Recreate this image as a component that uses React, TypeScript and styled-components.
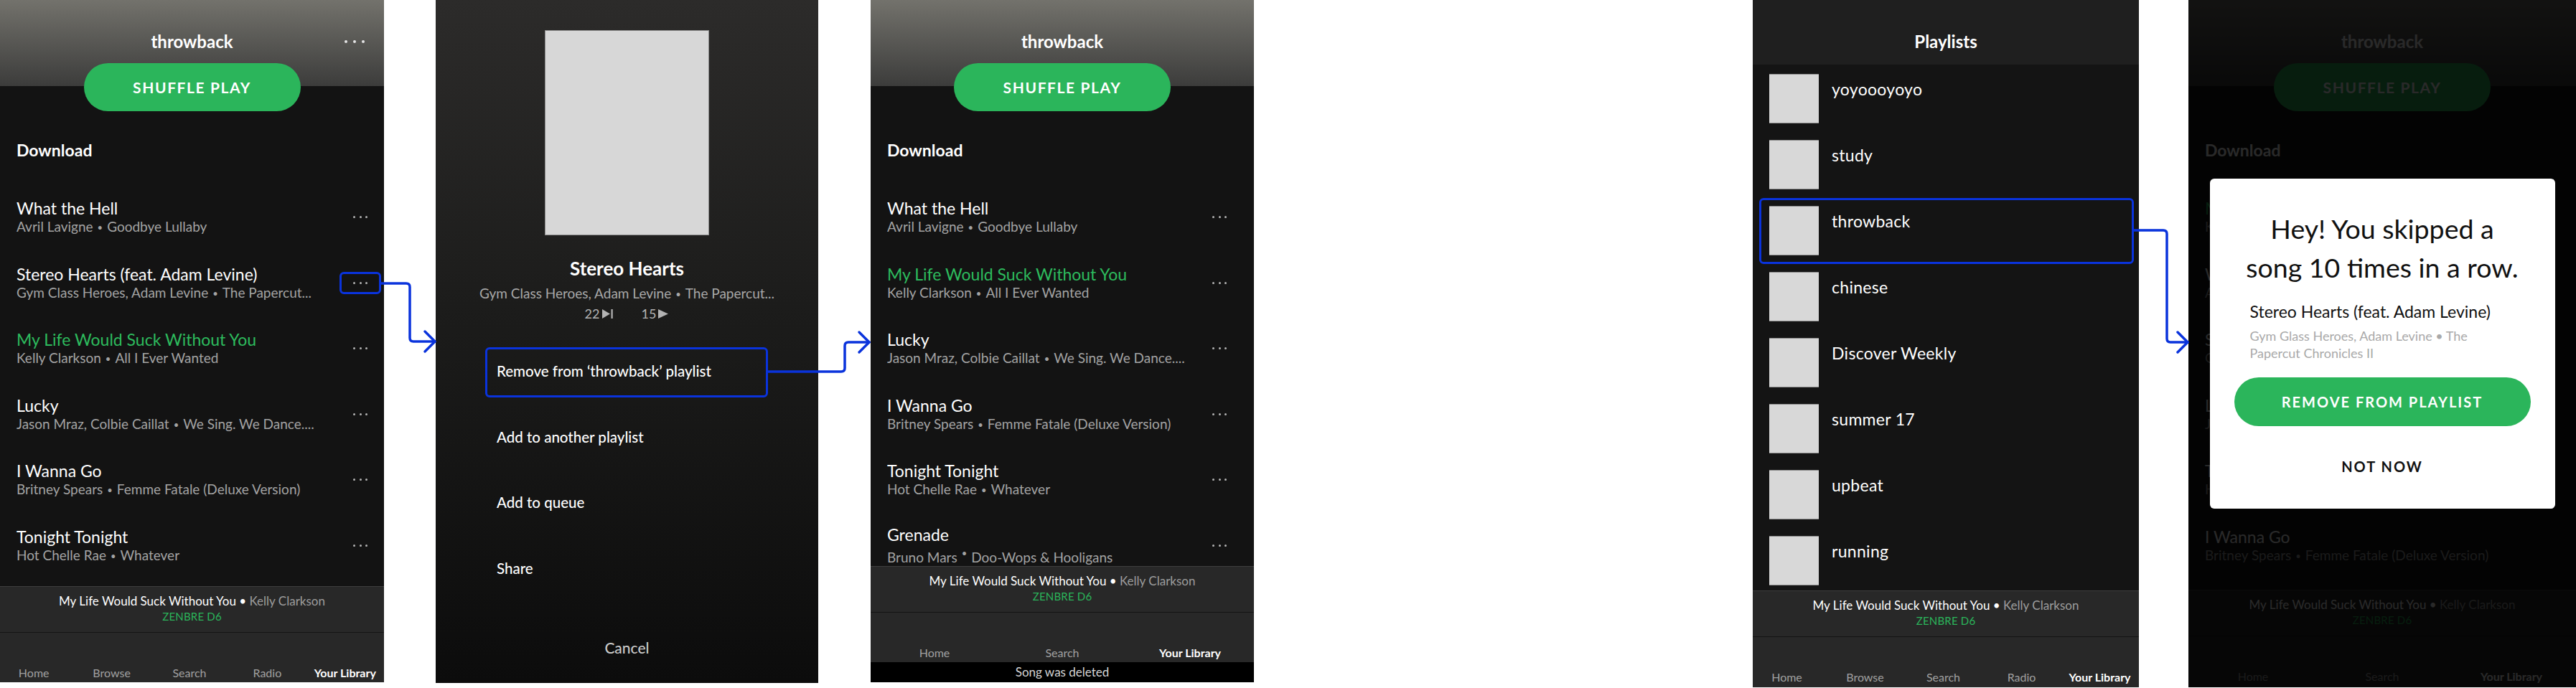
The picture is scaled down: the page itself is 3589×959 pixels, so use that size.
import React from "react";
import styled, { createGlobalStyle } from "styled-components";

const GREEN = "#2bb55b";
const BLUE = "#0a33dc";

const GlobalStyle = createGlobalStyle`
  html, body { margin: 0; padding: 0; background: #ffffff; }
  body { font-family: Lato, "Open Sans", sans-serif; -webkit-font-smoothing: antialiased; }
  * { box-sizing: border-box; }
`;

const Page = styled.div`
  position: relative;
  width: 3589px;
  height: 959px;
  display: flex;
  align-items: flex-start;
  overflow: hidden;
  background: #ffffff;
  font-family: Lato, "Open Sans", sans-serif;
`;

const Phone = styled.div<{ $w: number; $h: number; $ml: number; $bg?: string }>`
  position: relative;
  flex: none;
  width: ${(p) => p.$w}px;
  height: ${(p) => p.$h}px;
  margin-left: ${(p) => p.$ml}px;
  display: flex;
  flex-direction: column;
  overflow: hidden;
  background: ${(p) => p.$bg ?? "#131313"};
  color: #ffffff;
`;

const Scroll = styled.div<{ $gradient?: boolean }>`
  flex: 1;
  min-height: 0;
  overflow: hidden;
  background: ${(p) =>
    p.$gradient
      ? "linear-gradient(180deg, #73726c 0px, #3c3c3b 120px, #131313 120px)"
      : "#131313"};
`;

const TitleBar = styled.div`
  display: grid;
  grid-template-columns: 1fr auto 1fr;
  align-items: center;
  height: 28px;
  margin-top: 44px;
`;

const Title = styled.div`
  grid-column: 2;
  font-size: 24px;
  font-weight: 700;
  line-height: 28px;
  text-align: center;
`;

const DotGroup = styled.div<{ $gap: number; $pr?: number }>`
  grid-column: 3;
  justify-self: end;
  display: flex;
  align-items: center;
  gap: ${(p) => p.$gap}px;
  padding-right: ${(p) => p.$pr ?? 0}px;
`;

const Dot = styled.span<{ $size: number; $color: string }>`
  display: block;
  width: ${(p) => p.$size}px;
  height: ${(p) => p.$size}px;
  border-radius: 50%;
  background: ${(p) => p.$color};
`;

const PillButton = styled.div<{ $w: number }>`
  width: ${(p) => p.$w}px;
  height: 67px;
  margin: 16px auto 0;
  border-radius: 34px;
  background: ${GREEN};
  display: flex;
  align-items: center;
  justify-content: center;
  font-size: 21px;
  font-weight: 700;
  letter-spacing: 1.6px;
  color: #ffffff;
`;

const SectionLabel = styled.div`
  margin-top: 40px;
  padding-left: 23px;
  font-size: 23px;
  font-weight: 700;
  line-height: 28px;
`;

const SongList = styled.div`
  margin-top: 34px;
  display: flex;
  flex-direction: column;
`;

const SongRow = styled.div<{ $pr: number }>`
  flex: none;
  height: 91.5px;
  display: flex;
  align-items: center;
  padding-left: 23px;
  padding-right: ${(p) => p.$pr}px;
`;

const SongText = styled.div`
  flex: 1;
  min-width: 0;
`;

const SongTitle = styled.div<{ $active?: boolean }>`
  font-size: 23px;
  line-height: 28px;
  white-space: nowrap;
  color: ${(p) => (p.$active ? "#2dbb5d" : "#ffffff")};
`;

const SongSub = styled.div`
  font-size: 19px;
  line-height: 24px;
  white-space: nowrap;
  color: #a3a3a3;
`;

const Sep = styled.span<{ $raised?: boolean }>`
  font-size: 13px;
  margin: 0 6px;
  vertical-align: ${(p) => (p.$raised ? "8px" : "1px")};
`;

const DotsCell = styled.div<{ $boxed?: boolean }>`
  flex: none;
  width: 58px;
  height: 31px;
  border: 3px solid ${(p) => (p.$boxed ? BLUE : "transparent")};
  border-radius: 6px;
  display: flex;
  align-items: center;
  justify-content: center;
  gap: 5.5px;
`;

const MiniPlayer = styled.div`
  flex: none;
  height: 65px;
  background: #282828;
  border-top: 1px solid #3e3e3e;
  border-bottom: 1px solid #141414;
  padding-top: 9px;
  text-align: center;
`;

const MiniLine = styled.div`
  font-size: 17px;
  line-height: 22px;
  color: #ffffff;
  white-space: nowrap;
`;

const MiniArtist = styled.span`
  color: #9d9d9d;
`;

const DeviceLine = styled.div`
  font-size: 15px;
  line-height: 20px;
  color: ${GREEN};
  letter-spacing: 0.2px;
`;

const TabBar = styled.div<{ $cols: number; $h: number; $shift: number }>`
  flex: none;
  height: ${(p) => p.$h}px;
  margin-left: -${(p) => p.$shift}px;
  width: calc(100% + ${(p) => p.$shift}px);
  background: #282828;
  display: grid;
  grid-template-columns: repeat(${(p) => p.$cols}, 1fr);
  align-items: end;
  padding-bottom: ${(p) => p.$h - 66}px;
`;

const Tab = styled.div<{ $active?: boolean }>`
  font-size: 16px;
  line-height: 20px;
  text-align: center;
  white-space: nowrap;
  color: ${(p) => (p.$active ? "#ffffff" : "#a0a0a0")};
  font-weight: ${(p) => (p.$active ? 700 : 400)};
`;

const Toast = styled.div`
  flex: none;
  height: 28px;
  background: #000000;
  color: #d6d6d6;
  font-size: 17px;
  line-height: 28px;
  text-align: center;
`;

/* ---------- Context sheet ---------- */

const Art = styled.div<{ $w: number; $h: number }>`
  flex: none;
  width: ${(p) => p.$w}px;
  height: ${(p) => p.$h}px;
  background: #d7d7d7;
  border: 1px solid #8a8a8a;
`;

const SheetBody = styled.div`
  display: flex;
  flex-direction: column;
  align-items: center;
  padding-top: 42px;
`;

const SheetTitle = styled.div`
  margin-top: 30px;
  font-size: 26px;
  font-weight: 700;
  line-height: 32px;
`;

const SheetSub = styled.div`
  margin-top: 7px;
  font-size: 19px;
  line-height: 24px;
  color: #a8a8a8;
  white-space: nowrap;
`;

const Stats = styled.div`
  margin-top: 5px;
  display: flex;
  align-items: center;
  gap: 39px;
  font-size: 18px;
  line-height: 20px;
  color: #b3b3b3;
`;

const Stat = styled.div`
  display: flex;
  align-items: center;
  gap: 2px;
`;

const MenuList = styled.div`
  align-self: stretch;
  margin-top: 37px;
  display: flex;
  flex-direction: column;
  gap: 21.7px;
`;

const MenuItem = styled.div<{ $boxed?: boolean }>`
  margin-left: 69px;
  width: 394px;
  height: 70px;
  border: 3px solid ${(p) => (p.$boxed ? BLUE : "transparent")};
  border-radius: 6px;
  padding: 0 0 4px 13px;
  display: flex;
  align-items: center;
  font-size: 20.5px;
  font-weight: 500;
  color: #ffffff;
  white-space: nowrap;
`;

const CancelLabel = styled.div`
  margin-top: 59px;
  font-size: 21px;
  line-height: 30px;
  font-weight: 500;
  color: #c9c9c9;
`;

/* ---------- Playlists ---------- */

const PlaylistHeader = styled.div`
  flex: none;
  height: 90px;
  background: #1f1f1f;
  padding-top: 44px;
  font-size: 24px;
  font-weight: 700;
  line-height: 28px;
  text-align: center;
`;

const PlaylistRows = styled.div`
  flex: 1;
  min-height: 0;
  overflow: hidden;
  background: #141414;
  padding-top: 1.5px;
  display: flex;
  flex-direction: column;
`;

const PlaylistRow = styled.div<{ $boxed?: boolean }>`
  flex: none;
  height: 92px;
  width: 522px;
  margin-left: 9px;
  border: 3px solid ${(p) => (p.$boxed ? BLUE : "transparent")};
  border-radius: 6px;
  padding: 8.5px 0 0 11px;
  display: flex;
  align-items: flex-start;
`;

const Thumb = styled.div`
  flex: none;
  width: 69px;
  height: 69px;
  background: #d8d8d8;
  border-top: 1px solid #8e8e8e;
  border-bottom: 1px solid #8e8e8e;
`;

const PlaylistName = styled.div`
  margin-left: 18px;
  margin-top: 7px;
  font-size: 23px;
  line-height: 28px;
  letter-spacing: 0.3px;
`;

/* ---------- Modal ---------- */

const Dimmer = styled.div`
  position: absolute;
  inset: 0;
  background: rgba(0, 0, 0, 0.84);
  display: flex;
  align-items: center;
  justify-content: center;
`;

const Modal = styled.div`
  width: 481px;
  background: #ffffff;
  border-radius: 6px;
  padding: 43px 34px 45px;
  color: #111111;
`;

const ModalHeading = styled.div`
  font-size: 37.5px;
  line-height: 54px;
  text-align: center;
  white-space: nowrap;
`;

const ModalSong = styled.div`
  margin-top: 19px;
  padding-left: 22px;
  font-size: 23px;
  line-height: 30px;
`;

const ModalSub = styled.div`
  margin-top: 7px;
  padding: 0 40px 0 22px;
  font-size: 18px;
  line-height: 24px;
  color: #a9a9a9;
`;

const ModalButton = styled.div`
  margin-top: 22px;
  height: 68px;
  border-radius: 34px;
  background: ${GREEN};
  color: #ffffff;
  display: flex;
  align-items: center;
  justify-content: center;
  font-size: 20px;
  font-weight: 700;
  letter-spacing: 2px;
`;

const ModalLink = styled.div`
  margin-top: 42px;
  font-size: 20px;
  font-weight: 700;
  letter-spacing: 2px;
  line-height: 28px;
  text-align: center;
`;

const Annotations = styled.svg`
  position: absolute;
  left: 0;
  top: 0;
  width: 3589px;
  height: 959px;
  pointer-events: none;
`;

/* ---------- data ---------- */

type Song = {
  title: string;
  artist: string;
  album: string;
  active?: boolean;
  boxed?: boolean;
  raised?: boolean;
};

const WHAT: Song = { title: "What the Hell", artist: "Avril Lavigne", album: "Goodbye Lullaby" };
const STEREO: Song = {
  title: "Stereo Hearts (feat. Adam Levine)",
  artist: "Gym Class Heroes, Adam Levine",
  album: "The Papercut...",
};
const MYLIFE: Song = {
  title: "My Life Would Suck Without You",
  artist: "Kelly Clarkson",
  album: "All I Ever Wanted",
  active: true,
};
const LUCKY: Song = { title: "Lucky", artist: "Jason Mraz, Colbie Caillat", album: "We Sing. We Dance...." };
const WANNA: Song = { title: "I Wanna Go", artist: "Britney Spears", album: "Femme Fatale (Deluxe Version)" };
const TONIGHT: Song = { title: "Tonight Tonight", artist: "Hot Chelle Rae", album: "Whatever" };
const GRENADE: Song = { title: "Grenade", artist: "Bruno Mars", album: "Doo-Wops & Hooligans", raised: true };

const PLAYLISTS = ["yoyoooyoyo", "study", "throwback", "chinese", "Discover Weekly", "summer 17", "upbeat", "running"];

/* ---------- pieces ---------- */

function RowDots() {
  return (
    <>
      <Dot $size={3} $color="#b4b4b4" />
      <Dot $size={3} $color="#b4b4b4" />
      <Dot $size={3} $color="#b4b4b4" />
    </>
  );
}

function SongItem({ song, pr, showDots = true }: { song: Song; pr: number; showDots?: boolean }) {
  return (
    <SongRow $pr={pr}>
      <SongText>
        <SongTitle $active={song.active}>{song.title}</SongTitle>
        <SongSub>
          {song.artist}
          <Sep $raised={song.raised}>•</Sep>
          {song.album}
        </SongSub>
      </SongText>
      <DotsCell $boxed={song.boxed}>{showDots && <RowDots />}</DotsCell>
    </SongRow>
  );
}

function PlaylistView({
  songs,
  headerDots,
  pr,
  rowDots = true,
}: {
  songs: Song[];
  headerDots: boolean;
  pr: number;
  rowDots?: boolean;
}) {
  return (
    <Scroll $gradient>
      <TitleBar>
        <Title>throwback</Title>
        {headerDots && (
          <DotGroup $gap={8} $pr={27}>
            <Dot $size={4} $color="#e6e6e6" />
            <Dot $size={4} $color="#e6e6e6" />
            <Dot $size={4} $color="#e6e6e6" />
          </DotGroup>
        )}
      </TitleBar>
      <PillButton $w={302}>SHUFFLE PLAY</PillButton>
      <SectionLabel>Download</SectionLabel>
      <SongList>
        {songs.map((s) => (
          <SongItem key={s.title} song={s} pr={pr} showDots={rowDots} />
        ))}
      </SongList>
    </Scroll>
  );
}

function NowPlaying() {
  return (
    <MiniPlayer>
      <MiniLine>
        My Life Would Suck Without You • <MiniArtist>Kelly Clarkson</MiniArtist>
      </MiniLine>
      <DeviceLine>ZENBRE D6</DeviceLine>
    </MiniPlayer>
  );
}

function Tabs({ full, h }: { full: boolean; h: number }) {
  const tabs = full ? ["Home", "Browse", "Search", "Radio", "Your Library"] : ["Home", "Search", "Your Library"];
  return (
    <TabBar $cols={tabs.length} $h={h} $shift={full ? 7 : 0}>
      {tabs.map((t) => (
        <Tab key={t} $active={t === "Your Library"}>
          {t}
        </Tab>
      ))}
    </TabBar>
  );
}

function NextIcon() {
  return (
    <svg width="17" height="15" viewBox="0 0 17 15">
      <path d="M1 1 L12 7.5 L1 14 Z" fill="#b3b3b3" />
      <rect x="13.5" y="1" width="2.2" height="13" fill="#b3b3b3" />
    </svg>
  );
}

function PlayIcon() {
  return (
    <svg width="16" height="15" viewBox="0 0 16 15">
      <path d="M1 1 L15 7.5 L1 14 Z" fill="#b3b3b3" />
    </svg>
  );
}

export default function App() {
  return (
    <Page>
      <GlobalStyle />

      {/* 1: playlist with menu trigger */}
      <Phone $w={535} $h={951} $ml={0}>
        <PlaylistView
          songs={[WHAT, { ...STEREO, boxed: true }, MYLIFE, LUCKY, WANNA, TONIGHT]}
          headerDots
          pr={4}
        />
        <NowPlaying />
        <Tabs full h={69} />
      </Phone>

      {/* 2: context sheet */}
      <Phone $w={533} $h={952} $ml={72} $bg="linear-gradient(180deg, #2c2b2a 0%, #1c1c1b 45%, #0c0c0c 100%)">
        <SheetBody>
          <Art $w={229} $h={286} />
          <SheetTitle>Stereo Hearts</SheetTitle>
          <SheetSub>
            Gym Class Heroes, Adam Levine<Sep>•</Sep>The Papercut...
          </SheetSub>
          <Stats>
            <Stat>
              22
              <NextIcon />
            </Stat>
            <Stat>
              15
              <PlayIcon />
            </Stat>
          </Stats>
          <MenuList>
            <MenuItem $boxed>Remove from ‘throwback’ playlist</MenuItem>
            <MenuItem>Add to another playlist</MenuItem>
            <MenuItem>Add to queue</MenuItem>
            <MenuItem>Share</MenuItem>
          </MenuList>
          <CancelLabel>Cancel</CancelLabel>
        </SheetBody>
      </Phone>

      {/* 3: after delete */}
      <Phone $w={534} $h={951} $ml={73}>
        <PlaylistView songs={[WHAT, MYLIFE, LUCKY, WANNA, TONIGHT, GRENADE]} headerDots={false} pr={19} />
        <NowPlaying />
        <Tabs full={false} h={69} />
        <Toast>Song was deleted</Toast>
      </Phone>

      {/* 4: playlists */}
      <Phone $w={538} $h={958} $ml={695} $bg="#141414">
        <PlaylistHeader>Playlists</PlaylistHeader>
        <PlaylistRows>
          {PLAYLISTS.map((name) => (
            <PlaylistRow key={name} $boxed={name === "throwback"}>
              <Thumb />
              <PlaylistName>{name}</PlaylistName>
            </PlaylistRow>
          ))}
        </PlaylistRows>
        <NowPlaying />
        <Tabs full h={70} />
      </Phone>

      {/* 5: skip prompt */}
      <Phone $w={540} $h={958} $ml={69}>
        <PlaylistView
          songs={[MYLIFE, WHAT, STEREO, LUCKY, TONIGHT, WANNA]}
          headerDots={false}
          pr={19}
          rowDots={false}
        />
        <NowPlaying />
        <Tabs full={false} h={71} />
        <Dimmer>
          <Modal>
            <ModalHeading>
              Hey! You skipped a
              <br />
              song 10 times in a row.
            </ModalHeading>
            <ModalSong>Stereo Hearts (feat. Adam Levine)</ModalSong>
            <ModalSub>Gym Glass Heroes, Adam Levine • The Papercut Chronicles II</ModalSub>
            <ModalButton>REMOVE FROM PLAYLIST</ModalButton>
            <ModalLink>NOT NOW</ModalLink>
          </Modal>
        </Dimmer>
      </Phone>

      <Annotations viewBox="0 0 3589 959">
        <g fill="none" stroke={BLUE} strokeWidth={3.5} strokeLinecap="round" strokeLinejoin="round">
          <path d="M531 395 H566 Q571 395 571 400 V471 Q571 476 576 476 H606" />
          <path d="M592 462 L606 476 L592 490" />
          <path d="M1070 518 H1172 Q1177 518 1177 513 V482 Q1177 477 1182 477 H1211" />
          <path d="M1197 463 L1211 477 L1197 491" />
          <path d="M2973 321 H3014 Q3019 321 3019 326 V472 Q3019 477 3024 477 H3048" />
          <path d="M3034 463 L3048 477 L3034 491" />
        </g>
      </Annotations>
    </Page>
  );
}
